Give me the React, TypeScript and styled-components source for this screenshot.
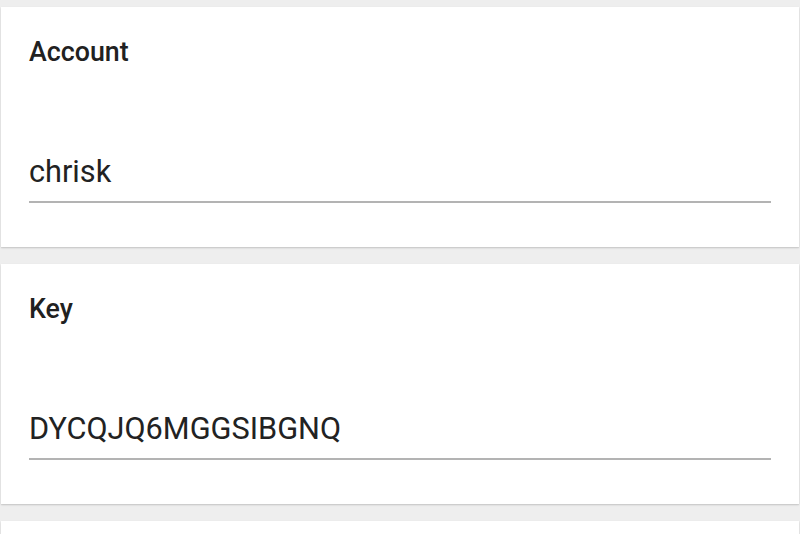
import React from "react";
import styled, { createGlobalStyle } from "styled-components";

const Global = createGlobalStyle`
  html, body { margin: 0; padding: 0; background: #eeeeee; }
  body { font-family: Roboto, "Noto Sans", sans-serif; -webkit-font-smoothing: antialiased; }
`;

const Page = styled.div`
  display: flex;
  flex-direction: column;
  gap: 17px;
  padding: 7px 1px 0 1px;
  height: 534px;
  box-sizing: border-box;
  overflow: hidden;
`;

const Card = styled.section`
  background: #ffffff;
  box-shadow: 0 1px 2px rgba(0, 0, 0, 0.12), 0 1px 1px rgba(0, 0, 0, 0.06);
  padding: 30px 28px 44px 28px;
  display: flex;
  flex-direction: column;
  flex-shrink: 0;
  min-height: 240px;
  box-sizing: border-box;
`;

const Label = styled.div`
  font-size: 26.8px;
  line-height: 30px;
  font-weight: 500;
  color: #212121;
  margin-bottom: 87px;
`;

const Field = styled.div`
  font-size: 30.7px;
  line-height: 36px;
  font-weight: 400;
  color: #222222;
  padding-bottom: 11px;
  border-bottom: 2px solid #b3b3b3;
`;

const fields = [
  { label: "Account", value: "chrisk" },
  { label: "Key", value: "DYCQJQ6MGGSIBGNQ" },
];

export default function App() {
  return (
    <>
      <Global />
      <Page>
        {fields.map((f) => (
          <Card key={f.label}>
            <Label>{f.label}</Label>
            <Field>{f.value}</Field>
          </Card>
        ))}
        <Card />
      </Page>
    </>
  );
}
